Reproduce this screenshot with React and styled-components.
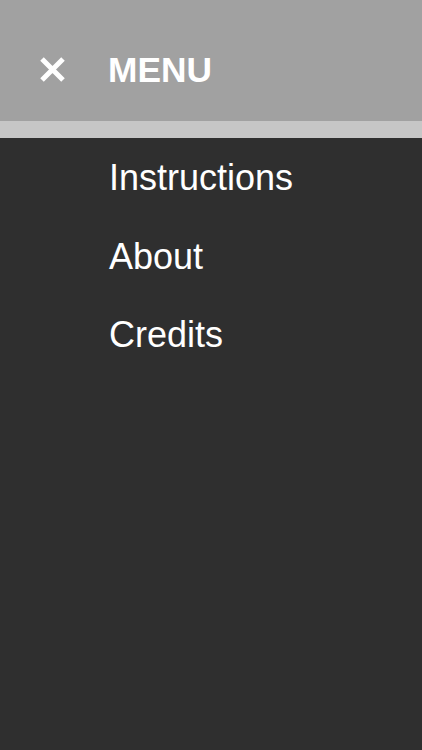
import React from "react";
import styled, { createGlobalStyle } from "styled-components";

const Global = createGlobalStyle`
  html, body { margin: 0; padding: 0; background: #2f2f2f; }
  body { font-family: "Liberation Sans", Arial, sans-serif; }
  #root { min-height: 100vh; }
`;

const Page = styled.div`
  min-height: 100vh;
  display: flex;
  flex-direction: column;
  background: #2f2f2f;
`;

const Header = styled.header`
  box-sizing: content-box;
  height: 71px;
  padding: 50px 0 0 39px;
  background: #a1a1a1;
  display: flex;
  align-items: flex-start;
  border-bottom: 17px solid #c6c6c6;
`;

const CloseButton = styled.button`
  width: 27px;
  height: 25px;
  margin-top: 7px;
  padding: 0;
  border: 0;
  background: none;
  display: flex;
  cursor: pointer;
`;

const Title = styled.h1`
  margin: 0 0 0 42px;
  font-size: 35.3px;
  line-height: 39px;
  font-weight: 700;
  color: #ffffff;
`;

const List = styled.nav`
  display: flex;
  flex-direction: column;
  padding: 1px 0 0 109px;
`;

const Item = styled.a`
  font-size: 36px;
  line-height: 78.5px;
  color: #ffffff;
  text-decoration: none;
`;

export default function App() {
  return (
    <Page>
      <Global />
      <Header>
        <CloseButton aria-label="Close">
          <svg width="27" height="25" viewBox="0 0 27 25">
            <path d="M3 2 L24 23 M24 2 L3 23" stroke="#fff" strokeWidth="5" strokeLinecap="butt" />
          </svg>
        </CloseButton>
        <Title>MENU</Title>
      </Header>
      <List>
        <Item href="#">Instructions</Item>
        <Item href="#">About</Item>
        <Item href="#">Credits</Item>
      </List>
    </Page>
  );
}
